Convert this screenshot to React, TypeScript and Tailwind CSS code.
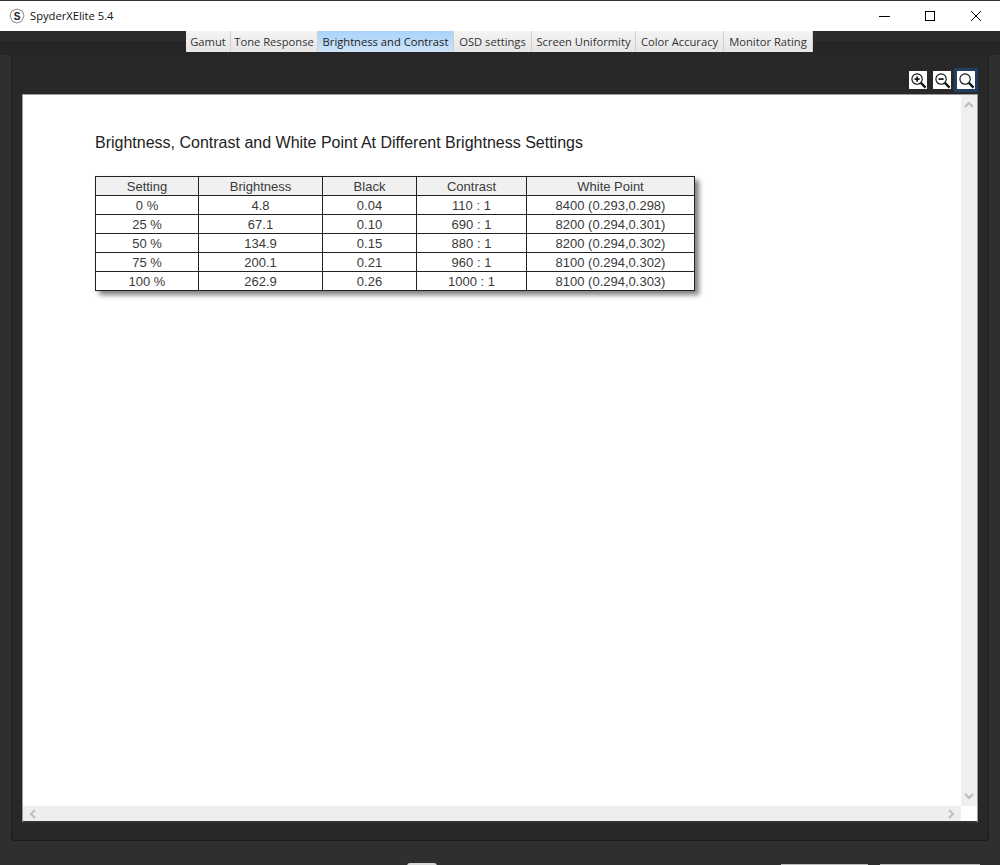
import React from "react";

const tabs = [
  { label: "Gamut", width: "w-[45px]" },
  { label: "Tone Response", width: "w-[87px]" },
  { label: "Brightness and Contrast", width: "w-[136px]", active: true },
  { label: "OSD settings", width: "w-[78px]" },
  { label: "Screen Uniformity", width: "w-[104px]" },
  { label: "Color Accuracy", width: "w-[88px]" },
  { label: "Monitor Rating", width: "w-[89px]" },
];

const headers = ["Setting", "Brightness", "Black", "Contrast", "White Point"];

const rows = [
  ["0 %", "4.8", "0.04", "110 : 1", "8400 (0.293,0.298)"],
  ["25 %", "67.1", "0.10", "690 : 1", "8200 (0.294,0.301)"],
  ["50 %", "134.9", "0.15", "880 : 1", "8200 (0.294,0.302)"],
  ["75 %", "200.1", "0.21", "960 : 1", "8100 (0.294,0.302)"],
  ["100 %", "262.9", "0.26", "1000 : 1", "8100 (0.294,0.303)"],
];

const colWidths = ["w-[103px]", "w-[124px]", "w-[94px]", "w-[110px]", "w-[168px]"];

const ZoomIcon = ({ mark }: { mark?: "plus" | "minus" }) => (
  <svg width="17" height="17" viewBox="0 0 18 18" fill="none" stroke="#111">
    <circle cx="7.5" cy="7.5" r="5.5" strokeWidth="1.2" />
    <path d="M11.5 11.5 L16.5 16.5" strokeWidth="2.4" />
    {mark && <path d="M4.8 7.5 H10.2" strokeWidth="1.8" />}
    {mark === "plus" && <path d="M7.5 4.8 V10.2" strokeWidth="1.8" />}
  </svg>
);

const Chevron = ({ d }: { d: string }) => (
  <svg width="10" height="10" viewBox="0 0 10 10" fill="none" stroke="#bdbdbd" strokeWidth="2">
    <path d={d} />
  </svg>
);

export default function App() {
  return (
    <div className="relative flex h-[865px] w-[1000px] flex-col overflow-hidden bg-[#2f2f2f] font-['Liberation_Sans',sans-serif]">
      {/* title bar */}
      <div className="flex h-[31px] shrink-0 items-center border-t border-[#333] bg-white pl-[9px] pr-px">
        <svg width="16" height="16" viewBox="0 0 16 16" className="shrink-0">
          <path d="M8 1 L13.5 3 L15 8 L12.5 13.5 L8 15 L3.5 13.5 L1 8 L2.5 3 Z" fill="#fff" stroke="#888" strokeWidth="1" />
          <text x="8" y="11.5" textAnchor="middle" fontSize="10" fontWeight="700" fill="#222" fontFamily="Liberation Sans, sans-serif">S</text>
        </svg>
        <span className="ml-[5px] font-['Open_Sans',sans-serif] text-[11.2px] text-[#111]">SpyderXElite 5.4</span>
        <div className="ml-auto flex h-full items-center">
          <div className="flex w-[46px] justify-center">
            <div className="h-px w-[11px] bg-black" />
          </div>
          <div className="flex w-[46px] justify-center">
            <div className="h-[10px] w-[10px] border border-black" />
          </div>
          <div className="flex w-[46px] justify-center">
            <svg width="12" height="12" viewBox="0 0 12 12" stroke="#111" strokeWidth="1">
              <path d="M1 1 L11 11 M11 1 L1 11" />
            </svg>
          </div>
        </div>
      </div>

      {/* tab strip */}
      <div className="relative h-[24px] shrink-0 bg-[linear-gradient(#2d2d2d_0,#2d2d2d_10px,#262626_10px)]">
        <div className="flex h-[21px] pl-[186px] font-['Open_Sans',sans-serif] text-[11.2px] text-[#333]">
          {tabs.map((tab) => (
            <div
              key={tab.label}
              className={`flex items-center justify-center whitespace-nowrap border-r border-[#d0d0d0] pt-px ${tab.width} ${
                tab.active
                  ? "bg-[linear-gradient(#a9d3fb,#cfe4f8)] text-[#222]"
                  : "bg-[linear-gradient(#f4f4f4,#e6e6e6)]"
              }`}
            >
              {tab.label}
            </div>
          ))}
        </div>
      </div>

      {/* main panel */}
      <div className="mx-[11px] flex h-[786px] shrink-0 flex-col rounded-b-[4px] border-x border-b border-[#1c1c1c] bg-[#282828]">
        <div className="flex h-[39px] shrink-0 items-end justify-end gap-[6px] pb-[5px] pr-[13px]">
          <div className="flex h-[18px] w-[18px] items-center justify-center bg-white">
            <ZoomIcon mark="plus" />
          </div>
          <div className="flex h-[18px] w-[18px] items-center justify-center bg-white">
            <ZoomIcon mark="minus" />
          </div>
          <div className="flex h-[18px] w-[18px] items-center justify-center bg-white outline-3 outline-[#20405f]">
            <ZoomIcon />
          </div>
        </div>

        {/* report viewport */}
        <div className="ml-[10px] flex h-[729px] w-[956px] flex-col border-x border-t border-b-2 border-[#9a9a9a] border-b-[#333] bg-white">
          <div className="flex min-h-0 flex-1">
            <div className="flex-1 pl-[72px] pt-[38px]">
              <h1 className="text-[16px] leading-[20px] text-[#222]">
                Brightness, Contrast and White Point At Different Brightness Settings
              </h1>
              <table className="mt-[23px] table-fixed border-collapse text-center text-[13px] text-[#3a3a3a] shadow-[4px_4px_5px_rgba(0,0,0,0.5)]">
                <thead>
                  <tr className="h-[19px] bg-[#f0f0f0]">
                    {headers.map((h, i) => (
                      <th key={h} className={`border border-[#222] p-0 pt-px font-normal leading-[17px] ${colWidths[i]}`}>
                        {h}
                      </th>
                    ))}
                  </tr>
                </thead>
                <tbody className="bg-white">
                  {rows.map((row) => (
                    <tr key={row[0]} className="h-[19px]">
                      {row.map((cell, i) => (
                        <td key={i} className="border border-[#222] p-0 pt-px leading-[17px]">
                          {cell}
                        </td>
                      ))}
                    </tr>
                  ))}
                </tbody>
              </table>
            </div>
            <div className="flex w-[16px] shrink-0 flex-col items-center justify-between bg-[#efefef] py-[5px]">
              <Chevron d="M1 7 L5 3 L9 7" />
              <Chevron d="M1 3 L5 7 L9 3" />
            </div>
          </div>
          <div className="flex h-[15px] shrink-0">
            <div className="flex flex-1 items-center justify-between bg-[#eeeeee] px-[5px]">
              <Chevron d="M7 1 L3 5 L7 9" />
              <Chevron d="M3 1 L7 5 L3 9" />
            </div>
            <div className="w-[16px] shrink-0 bg-white" />
          </div>
        </div>
      </div>

      {/* tops of the buttons cut off at the bottom edge */}
      <div className="mt-[22px] flex h-[3px] pl-[407px]">
        <div className="h-[3px] w-[30px] rounded-t-full bg-[#d8d8d8]" />
        <div className="ml-[344px] h-[2px] w-[87px] self-end bg-[#bbb]" />
        <div className="ml-[12px] h-[2px] w-[100px] self-end bg-[#bbb]" />
      </div>
    </div>
  );
}
